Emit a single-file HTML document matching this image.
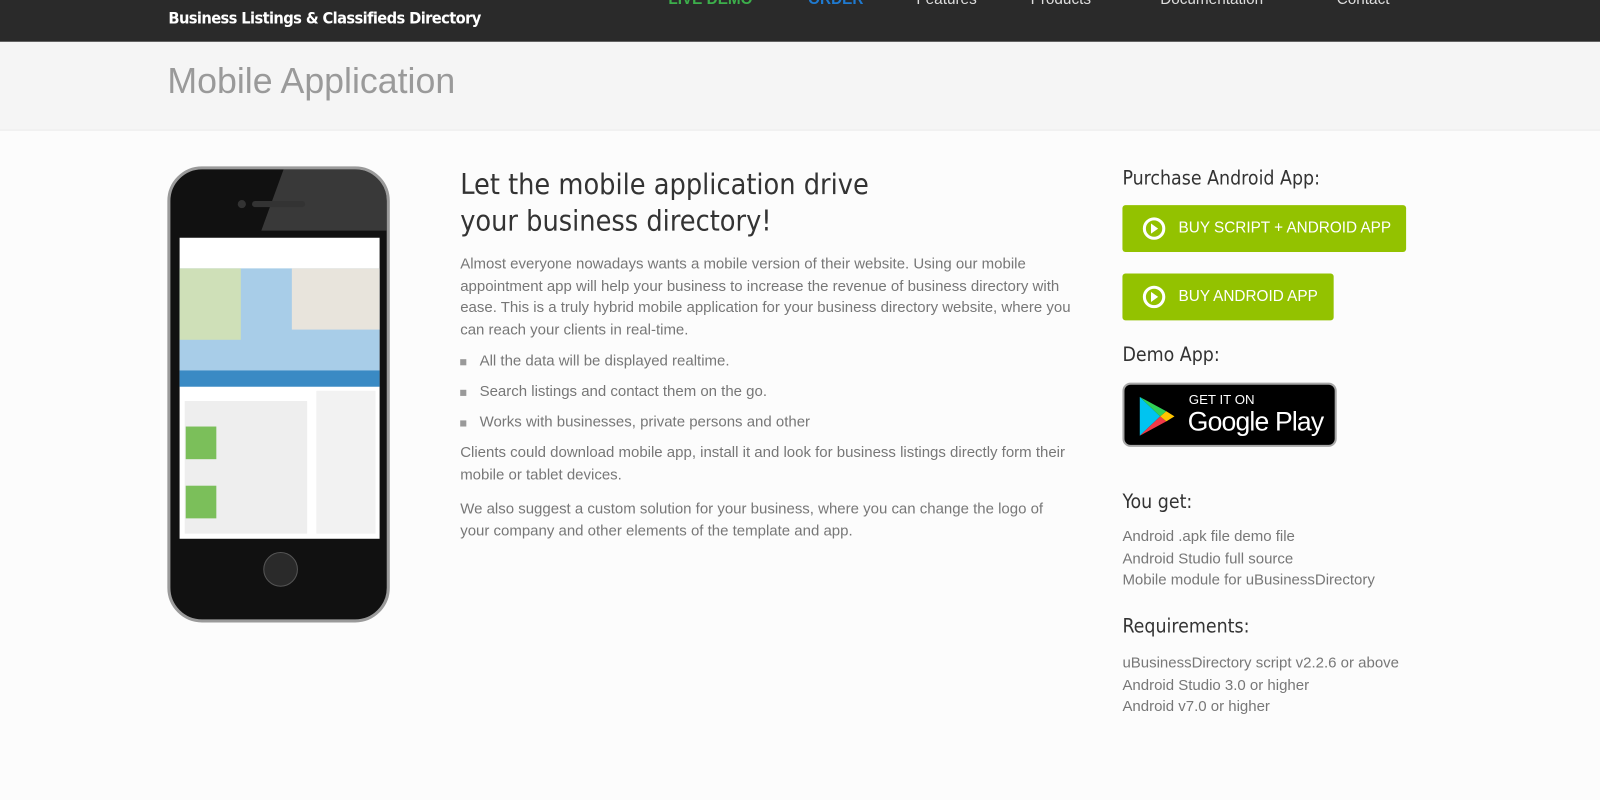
<!DOCTYPE html>
<html><head><meta charset="utf-8"><style>
*{margin:0;padding:0;box-sizing:border-box}
body{width:1600px;height:800px;background:#fcfcfc;font-family:"Liberation Sans",sans-serif;position:relative;overflow:hidden}
#w{position:absolute;left:0;top:0;width:1568px;height:784px;transform:scale(1.0204);transform-origin:0 0}
.top{position:absolute;left:0;top:0;width:1600px;height:41px;background:#2a2a2a}
.top .sub{position:absolute;left:165px;top:8px;color:#fff;font-size:16px;font-family:"DejaVu Sans Condensed","DejaVu Sans",sans-serif;font-weight:bold;letter-spacing:-0.6px}
.nav{position:absolute;top:-9px;font-size:15px;color:#ddd}
.title{position:absolute;left:0;top:41px;width:1600px;height:87px;background:#f5f5f5;border-bottom:1px solid #ebebeb}
.title h1{position:absolute;left:164px;top:19px;font-size:35px;color:#9a9a9a;font-family:"Liberation Sans",sans-serif;font-weight:normal}
.abs{position:absolute}
h2{font-family:"DejaVu Sans Condensed","DejaVu Sans",sans-serif;font-weight:normal;color:#333}
p,li{color:#777;font-size:14.7px;line-height:21.5px}
.btn{position:absolute;left:1100px;height:46px;background:#93c200;border-radius:3px;color:#fff;font-size:15px;line-height:46px;padding-left:55px}
.btn .ic{position:absolute;left:20px;top:12px;width:22px;height:22px;border:3px solid #fff;border-radius:50%}
.btn .ic:after{content:"";position:absolute;left:5px;top:3px;border-left:7px solid #fff;border-top:5px solid transparent;border-bottom:5px solid transparent}
ul{list-style:none}
li{position:relative;padding-left:19px;margin-bottom:8.5px}
li:before{content:"";position:absolute;left:0;top:8px;width:6px;height:6px;background:#999}
</style></head><body><div id="w">
<div class="top">
<div class="sub">Business Listings &amp; Classifieds Directory</div>
<div class="nav" style="left:655px;color:#3cae4b;font-weight:bold">LIVE DEMO</div>
<div class="nav" style="left:792px;color:#1f7ad0;font-weight:bold">ORDER</div>
<div class="nav" style="left:898px">Features</div>
<div class="nav" style="left:1010px">Products</div>
<div class="nav" style="left:1137px">Documentation</div>
<div class="nav" style="left:1310px">Contact</div>
</div>
<div class="title"><h1>Mobile Application</h1></div>

<div class="abs" style="left:164px;top:163px;width:218px;height:447px;background:#111;border-radius:34px;border:3px solid #9a9a9a;overflow:hidden">
 <div class="abs" style="left:100px;top:0;width:130px;height:60px;background:#555;transform:skewX(-20deg);opacity:.6"></div>
 <div class="abs" style="left:80px;top:31px;width:52px;height:6px;background:#333;border-radius:3px"></div>
 <div class="abs" style="left:66px;top:30px;width:8px;height:8px;background:#333;border-radius:50%"></div>
 <div class="abs" style="left:9px;top:67px;width:196px;height:295px;background:#fff">
   <div class="abs" style="left:0;top:30px;width:196px;height:100px;background:#a8cde8"></div>
   <div class="abs" style="left:0;top:30px;width:60px;height:70px;background:#cfe0b8"></div>
   <div class="abs" style="left:110px;top:30px;width:86px;height:60px;background:#e8e4dc"></div>
   <div class="abs" style="left:0;top:130px;width:196px;height:16px;background:#3a8ac4"></div>
   <div class="abs" style="left:5px;top:160px;width:120px;height:130px;background:#eee"></div>
   <div class="abs" style="left:6px;top:185px;width:30px;height:32px;background:#7bbf5a"></div>
   <div class="abs" style="left:6px;top:243px;width:30px;height:32px;background:#7bbf5a"></div>
   <div class="abs" style="left:134px;top:150px;width:58px;height:140px;background:#f2f2f2"></div>
 </div>
 <div class="abs" style="left:91px;top:375px;width:34px;height:34px;border-radius:50%;background:#2a2a2a;border:1px solid #555"></div>
</div>

<h2 class="abs" style="left:451px;top:163px;font-size:28px;line-height:36px">Let the mobile application drive<br>your business directory!</h2>
<div class="abs" style="left:451px;top:249px;width:605px">
<p>Almost everyone nowadays wants a mobile version of their website. Using our mobile appointment app will help your business to increase the revenue of business directory with ease. This is a truly hybrid mobile application for your business directory website, where you can reach your clients in real-time.</p>
<ul style="margin-top:9px">
<li>All the data will be displayed realtime.</li>
<li>Search listings and contact them on the go.</li>
<li>Works with businesses, private persons and other</li>
</ul>
<p style="margin-top:2px">Clients could download mobile app, install it and look for business listings directly form their mobile or tablet devices.</p>
<p style="margin-top:12px">We also suggest a custom solution for your business, where you can change the logo of<br>your company and other elements of the template and app.</p>
</div>

<h2 class="abs" style="left:1100px;top:164px;font-size:19px">Purchase Android App:</h2>
<div class="btn" style="top:201px;width:278px"><span class="ic"></span>BUY SCRIPT + ANDROID APP</div>
<div class="btn" style="top:268px;width:207px"><span class="ic"></span>BUY ANDROID APP</div>
<h2 class="abs" style="left:1100px;top:337px;font-size:19px">Demo App:</h2>
<div class="abs" style="left:1100px;top:375px;width:210px;height:63px;background:#000;border:2px solid #a6a6a6;border-radius:8px">
 <svg class="abs" style="left:13px;top:11px" width="38" height="40" viewBox="0 0 38 40">
  <path d="M2 1 L22 20 L2 39 Z" fill="#00c4f0"/>
  <path d="M2 1 L28 15 L22 20 Z" fill="#30d158"/>
  <path d="M2 39 L28 25 L22 20 Z" fill="#f03a48"/>
  <path d="M28 15 L36 20 L28 25 L22 20 Z" fill="#ffc400"/>
 </svg>
 <div class="abs" style="left:63px;top:7px;color:#fff;font-size:13px">GET IT ON</div>
 <div class="abs" style="left:62px;top:21px;color:#fff;font-size:26px;letter-spacing:-0.8px">Google Play</div>
</div>
<h2 class="abs" style="left:1100px;top:481px;font-size:19px">You get:</h2>
<div class="abs" style="left:1100px;top:516px"><p>Android .apk file demo file<br>Android Studio full source<br>Mobile module for uBusinessDirectory</p></div>
<h2 class="abs" style="left:1100px;top:603px;font-size:19px">Requirements:</h2>
<div class="abs" style="left:1100px;top:640px"><p>uBusinessDirectory script v2.2.6 or above<br>Android Studio 3.0 or higher<br>Android v7.0 or higher</p></div>
</div></body></html>
